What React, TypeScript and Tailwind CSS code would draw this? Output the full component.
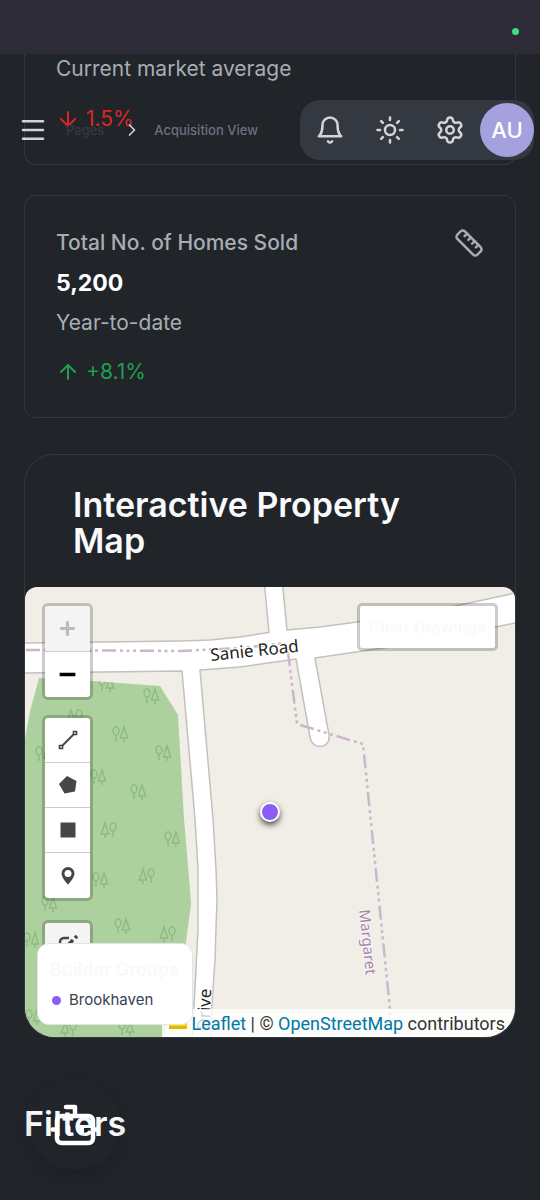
import type { ReactNode } from "react";
import { ArrowDown, ArrowUp, Bot, ChevronRight, Menu, Minus, Plus, Ruler, Settings, Sun } from "lucide-react";

function BellIcon() {
  return (
    <svg viewBox="0 0 24 24" className="size-[30px]" fill="none" stroke="currentColor" strokeWidth={2} strokeLinecap="round" strokeLinejoin="round" aria-hidden="true">
      <path d="M6 8a6 6 0 0 1 12 0c0 7 3 9 3 9H3s3-2 3-9" />
      <path d="M10.3 21a1.94 1.94 0 0 0 3.4 0" />
    </svg>
  );
}

function HeaderButton({ label, children }: { label: string; children: ReactNode }) {
  return (
    <button type="button" aria-label={label} className="flex size-[60px] items-center justify-center text-[#d1d5db]">
      {children}
    </button>
  );
}

function Header() {
  return (
    <header className="absolute inset-x-0 top-[100px] z-20 flex h-[60px] items-center justify-between pr-[6px] pl-[18px]">
      <div className="flex items-center">
        <button type="button" aria-label="Open menu" className="flex text-[#d1d5db]">
          <Menu size={30} />
        </button>
        <nav aria-label="Breadcrumb" className="ml-[18px] flex items-center text-[13px] leading-5 font-medium">
          <a href="#pages" className="text-[#363a40]">Pages</a>
          <ChevronRight size={20} className="mr-3 ml-[18px] text-[#d1d5db]" />
          <a href="#acquisition" className="text-[#6b7280]">Acquisition View</a>
        </nav>
      </div>
      <div className="flex items-center rounded-[20px] bg-[#343840]">
        <HeaderButton label="Notifications"><BellIcon /></HeaderButton>
        <HeaderButton label="Toggle theme"><Sun size={30} /></HeaderButton>
        <HeaderButton label="Settings"><Settings size={30} /></HeaderButton>
        <button type="button" aria-label="Account" className="size-[54px] rounded-full bg-[#a5a1de] text-[22px] font-medium text-white">
          AU
        </button>
      </div>
    </header>
  );
}

const treesRoundFirst = [
  [151, 697], [120, 735], [163, 754], [98, 778], [138, 793], [172, 840],
  [100, 881], [49, 905], [122, 927], [31, 941], [33, 1018], [106, 685], [43, 755], [126, 1029],
];
const treesConeFirst = [[109, 831], [147, 877], [168, 935], [69, 1030], [75, 718]];

function MapTiles() {
  return (
    <svg viewBox="25 588 490 450" preserveAspectRatio="xMidYMid slice" className="block h-[450px] w-full" role="img" aria-label="Street map">
      <defs>
        <g id="trees" fill="none" stroke="#8dbb80" strokeWidth="1.5">
          <ellipse cx="-4" cy="-3" rx="3" ry="4" />
          <path d="M-4 1v6M4 -7L0.5 4H7.5ZM4 4v4" />
        </g>
        <clipPath id="park">
          <path d="M39 679L92 682L160 687L178 716L184 820L190 890L191 905L186 943L178 1000L162 1038H25V740L30 712Z" />
        </clipPath>
      </defs>
      <rect x="25" y="588" width="490" height="450" fill="#f1eee8" />
      <path d="M39 679L92 682L160 687L178 716L184 820L190 890L191 905L186 943L178 1000L162 1038H25V740L30 712Z" fill="#add19e" />
      <g clipPath="url(#park)">
        {treesRoundFirst.map(([x, y]) => (
          <use key={`${x}-${y}`} href="#trees" transform={`translate(${x} ${y})`} />
        ))}
        {treesConeFirst.map(([x, y]) => (
          <use key={`${x}-${y}`} href="#trees" transform={`translate(${x} ${y}) scale(-1 1)`} />
        ))}
      </g>
      <path
        d="M20 644L180 642L210 641L240 638L269 633.500L264 580H282L287 631L320 628L357 623L455 607L520 593V623L480 631L390 648L315 659L329 736C331 750 312 752 310 738L296 660L240 668L200 671L213 820L216 870L217 900L215 960L211 1020L210 1045H192L196 970L198 930L198 870L195 820L182 672L20 674Z"
        fill="#fff"
        stroke="#c4c1bd"
        strokeWidth="1.500"
        strokeLinejoin="round"
      />
      <g fill="none" stroke="#cbb6cb" strokeWidth="2.500" strokeDasharray="14 4 3 3.500 3 3.500 3 4">
        <path d="M26 651L180 652L240 649L285 644" />
        <path d="M288 653L297 725L363 745L391 1020" />
      </g>
      <g fontFamily="'Noto Sans', sans-serif" paintOrder="stroke" stroke="#fff" strokeWidth="2">
        <text x="211" y="662" fontSize="17" fill="#222" transform="rotate(-6 211 662)">Sanie Road</text>
        <text x="209" y="1032" fontSize="17" fill="#222" transform="rotate(-87 209 1032)">Drive</text>
        <text x="359" y="911" fontSize="15" fill="#a583ab" strokeOpacity="0.500" transform="rotate(84 359 911)">Margaret</text>
      </g>
    </svg>
  );
}

function ToolButton({ label, children }: { label: string; children: ReactNode }) {
  return (
    <button type="button" aria-label={label} className="flex h-[45px] items-center justify-center border-b border-[#ccc] bg-white text-[#464646] last:border-b-0">
      <svg viewBox="0 0 24 24" className="size-6" fill="currentColor" aria-hidden="true">{children}</svg>
    </button>
  );
}

function MapControls() {
  const group = "flex w-[51px] flex-col overflow-hidden rounded-[6px] border-[3px] border-black/20 bg-clip-padding";
  return (
    <div className="absolute top-4 left-[17px] flex flex-col gap-[15px]">
      <div className={group}>
        <button type="button" disabled aria-label="Zoom in" className="flex h-[46px] items-center justify-center border-b border-[#ccc] bg-[#f4f4f4] text-[#bbb]">
          <Plus size={25} strokeWidth={3} strokeLinecap="butt" />
        </button>
        <button type="button" aria-label="Zoom out" className="flex h-[45px] items-center justify-center bg-white text-black">
          <Minus size={27} strokeWidth={3} strokeLinecap="butt" />
        </button>
      </div>
      <div className={group}>
        <ToolButton label="Draw a polyline">
          <path d="M5 19L19 5" stroke="currentColor" strokeWidth="2" />
          <path d="M3.500 17.500h3v3h-3zM17.500 3.500h3v3h-3z" fill="#fff" stroke="currentColor" strokeWidth="1.600" />
        </ToolButton>
        <ToolButton label="Draw a polygon"><path d="M11 3L20.500 8L19 18.500L8.500 20.500L3 11Z" /></ToolButton>
        <ToolButton label="Draw a rectangle"><path d="M4.500 4.500h15v15h-15z" /></ToolButton>
        <ToolButton label="Draw a marker">
          <path fillRule="evenodd" d="M12 3a6.500 6.500 0 0 0-6.500 6.500c0 4.500 6.500 11 6.500 11s6.500-6.500 6.500-11A6.500 6.500 0 0 0 12 3Zm0 3a3.500 3.500 0 1 1 0 7a3.500 3.500 0 0 1 0-7Z" />
        </ToolButton>
      </div>
      <div className={`${group} mt-1`}>
        <button type="button" disabled aria-label="Edit layers" className="flex h-[45px] items-start justify-center bg-[#f4f4f4] pt-[9px] text-[#464646]">
          <svg viewBox="0 0 24 24" className="size-6" fill="none" stroke="currentColor" strokeWidth="2.500" aria-hidden="true">
            <path d="M13 6H8a4 4 0 0 0-4 4v6a4 4 0 0 0 4 4h6a4 4 0 0 0 4-4v-2" />
            <path d="M10 15l7-7M19 6l2-2" strokeWidth="3.500" />
          </svg>
        </button>
      </div>
    </div>
  );
}

function PropertyMap() {
  return (
    <section className="mt-9 rounded-[30px] border border-[#34383d]">
      <h2 className="px-12 pt-8 pb-7 text-[34px] leading-9 font-semibold text-[#f8f9fa]">Interactive Property Map</h2>
      <div className="relative overflow-hidden rounded-t-xl rounded-b-[30px]">
        <MapTiles />
        <MapControls />
        <button type="button" className="absolute top-4 right-[17px] h-12 w-[141px] rounded-[5px] border-[3px] border-black/20 bg-white bg-clip-padding text-[16px] font-medium whitespace-nowrap text-[#f8f9fa]">
          Clear Drawings
        </button>
        <span className="absolute top-[215px] left-1/2 size-5 -translate-x-1/2 rounded-full border-2 border-white bg-[#8b5cf6] shadow-[0_3px_6px_rgba(0,0,0,0.7)]" />
        <div className="absolute right-0 bottom-0 flex h-7 items-center bg-white/80 pr-[10px] pl-[7px] font-['Roboto',sans-serif] text-[18px] whitespace-pre text-[#333]">
          <svg viewBox="0 0 18 12" className="mr-1 h-3 w-[18px]" aria-hidden="true">
            <path fill="#4c7be1" d="M0 0h18v6H0z" />
            <path fill="#ffd500" d="M0 6h18v3H0z" />
            <path fill="#e0bc00" d="M0 9h18v3H0z" />
          </svg>
          <a href="#leaflet" className="text-[#0078a8]">Leaflet</a>
          <span> | © </span>
          <a href="#openstreetmap" className="text-[#0078a8]">OpenStreetMap</a>
          <span> contributors</span>
        </div>
        <div className="absolute bottom-3 left-3 h-[82px] w-[156px] rounded-xl border border-[#e2e4e6] bg-white px-3 pt-3">
          <h3 className="text-[18px] leading-7 font-semibold whitespace-nowrap text-[#f8f9fa]">Builder Groups</h3>
          <p className="mt-1 flex items-center gap-2 pl-[2px] text-[15px] leading-6 text-[#374151]">
            <span className="size-[9px] rounded-full bg-[#8b5cf6]" />
            Brookhaven
          </p>
        </div>
      </div>
    </section>
  );
}

export default function App() {
  return (
    <div className="relative min-h-screen overflow-hidden bg-[#212429] font-['Inter',sans-serif]">
      <div className="flex h-[54px] items-center justify-end bg-[#2d2b36] pt-2 pr-[21px]">
        <span className="size-[7px] rounded-full bg-[#3ddc84]" />
      </div>
      <Header />
      <main className="px-6">
        <section className="rounded-b-xl border border-t-0 border-[#34383d] px-[31px] pb-[30px] text-[21px]">
          <p className="leading-[30px] text-[#a7adb5]">Current market average</p>
          <p className="mt-5 flex items-center gap-[6px] leading-[30px] text-[#dc2626]">
            <ArrowDown size={24} />
            1.5%
          </p>
        </section>
        <section className="mt-[30px] rounded-xl border border-[#34383d] px-[31px] pt-[31px] pb-[30px] text-[21px]">
          <div className="flex items-center justify-between text-[#a7adb5]">
            <h2 className="leading-8 font-medium">Total No. of Homes Sold</h2>
            <Ruler size={30} />
          </div>
          <p className="text-[23px] leading-12 font-bold text-white">5,200</p>
          <p className="leading-8 text-[#a7adb5]">Year-to-date</p>
          <p className="mt-[18px] flex items-center gap-[6px] leading-[30px] text-[#1f9f4f]">
            <ArrowUp size={24} />
            +8.1%
          </p>
        </section>
        <PropertyMap />
        <h2 className="mt-17 pb-14 text-[34px] leading-9 font-semibold text-[#f8f9fa]">Filters</h2>
      </main>
      <button type="button" aria-label="Open assistant" className="absolute bottom-[30px] left-[30px] flex size-[90px] items-center justify-center rounded-full text-white shadow-[0_6px_16px_rgba(0,0,0,0.14)]">
        <Bot size={54} />
      </button>
    </div>
  );
}
